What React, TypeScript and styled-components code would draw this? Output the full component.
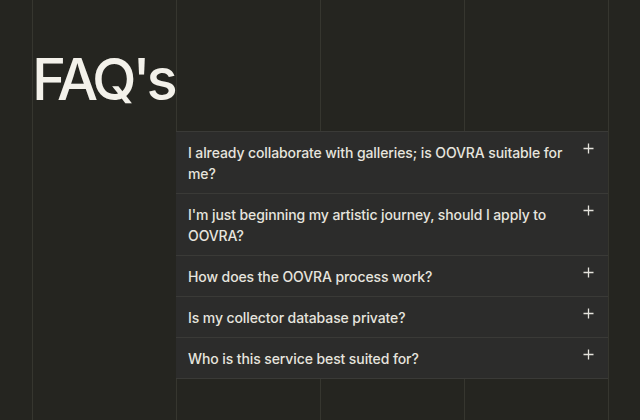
import styled, { createGlobalStyle } from "styled-components";

const questions = [
  "I already collaborate with galleries; is OOVRA suitable for me?",
  "I'm just beginning my artistic journey, should I apply to OOVRA?",
  "How does the OOVRA process work?",
  "Is my collector database private?",
  "Who is this service best suited for?",
];

const GlobalStyle = createGlobalStyle`
  html, body {
    margin: 0;
    padding: 0;
    background: #252520;
  }
`;

const PlusIcon = () => (
  <svg width="11" height="11" viewBox="0 0 11 11" fill="none">
    <path d="M5.5 0.5v10M0.5 5.5h10" stroke="#e4e2dc" strokeWidth="1.3" />
  </svg>
);

const FaqRow = ({ question }: { question: string }) => (
  <Row>
    <Question>{question}</Question>
    <Toggle>
      <PlusIcon />
    </Toggle>
  </Row>
);

const App = () => {
  return (
    <>
      <GlobalStyle />
      <Page>
        <Title>FAQ's</Title>
        <Panel>
          {questions.map((q, index) => (
            <FaqRow key={`faq-${index}`} question={q} />
          ))}
        </Panel>
      </Page>
    </>
  );
};

const Page = styled.main`
  width: 640px;
  height: 420px;
  overflow: hidden;
  display: grid;
  grid-template-columns: 32px 144px 432px 32px;
  grid-template-rows: 131px auto;
  align-items: start;
  background-color: #252520;
  background-image: linear-gradient(to right, #36362f 1px, transparent 1px);
  background-size: 144px 100%;
  background-position: 32px 0;
`;

const Title = styled.h1`
  grid-column: 2;
  grid-row: 1;
  margin: 50px 0 0 0;
  font-family: Inter, "Liberation Sans", sans-serif;
  font-weight: 500;
  font-size: 58px;
  line-height: 58px;
  letter-spacing: -4px;
  color: #f3f1ea;
  white-space: nowrap;
`;

const Panel = styled.section`
  grid-column: 3;
  grid-row: 2;
  background: #2c2c2b;
  border-top: 1px solid #3a3a37;
`;

const Row = styled.div`
  display: flex;
  align-items: flex-start;
  justify-content: space-between;
  gap: 12px;
  padding: 10px 14px 9px 12px;
  border-bottom: 1px solid #3a3a37;
`;

const Question = styled.p`
  margin: 0;
  max-width: 382px;
  font-family: Inter, "Noto Sans", sans-serif;
  font-weight: 500;
  font-size: 14px;
  line-height: 21px;
  letter-spacing: -0.1px;
  color: #e6e4de;
`;

const Toggle = styled.span`
  display: flex;
  margin-top: 1px;
  flex-shrink: 0;
`;

export default App;
